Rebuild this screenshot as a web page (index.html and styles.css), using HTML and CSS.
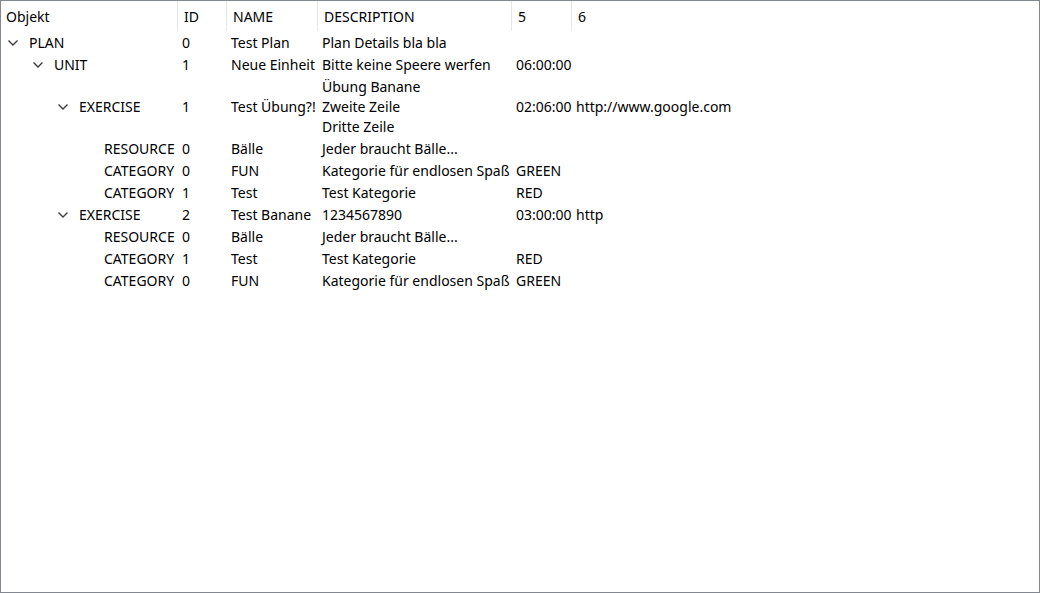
FILE: index.html
```html
<!DOCTYPE html>
<html>
<head>
<meta charset="utf-8">
<link rel="stylesheet" href="styles.css">
</head>
<body>
<div class="tree">
  <div class="header">
    <div class="hcell first">Objekt</div>
    <div class="hcell">ID</div>
    <div class="hcell">NAME</div>
    <div class="hcell">DESCRIPTION</div>
    <div class="hcell">5</div>
    <div class="hcell last">6</div>
  </div>
  <div class="row">
    <div class="cell obj lvl0"><span class="chev"><svg width="10" height="6" viewBox="0 0 10 6"><polyline points="0.5,0.5 5,5 9.5,0.5" fill="none" stroke="#3c3c3c" stroke-width="1.4"/></svg></span>PLAN</div>
    <div class="cell">0</div><div class="cell">Test Plan</div><div class="cell">Plan Details bla bla</div><div class="cell"></div><div class="cell"></div>
  </div>
  <div class="row">
    <div class="cell obj lvl1"><span class="chev"><svg width="10" height="6" viewBox="0 0 10 6"><polyline points="0.5,0.5 5,5 9.5,0.5" fill="none" stroke="#3c3c3c" stroke-width="1.4"/></svg></span>UNIT</div>
    <div class="cell">1</div><div class="cell">Neue Einheit</div><div class="cell">Bitte keine Speere werfen</div><div class="cell">06:00:00</div><div class="cell"></div>
  </div>
  <div class="row">
    <div class="cell obj lvl2"><span class="chev"><svg width="10" height="6" viewBox="0 0 10 6"><polyline points="0.5,0.5 5,5 9.5,0.5" fill="none" stroke="#3c3c3c" stroke-width="1.4"/></svg></span>EXERCISE</div>
    <div class="cell">1</div><div class="cell">Test Übung?!</div><div class="cell multi">Übung Banane<br>Zweite Zeile<br>Dritte Zeile</div><div class="cell">02:06:00</div><div class="cell">http://www.google.com</div>
  </div>
  <div class="row">
    <div class="cell obj lvl3">RESOURCE</div>
    <div class="cell">0</div><div class="cell">Bälle</div><div class="cell">Jeder braucht Bälle...</div><div class="cell"></div><div class="cell"></div>
  </div>
  <div class="row">
    <div class="cell obj lvl3">CATEGORY</div>
    <div class="cell">0</div><div class="cell">FUN</div><div class="cell">Kategorie für endlosen Spaß</div><div class="cell">GREEN</div><div class="cell"></div>
  </div>
  <div class="row">
    <div class="cell obj lvl3">CATEGORY</div>
    <div class="cell">1</div><div class="cell">Test</div><div class="cell">Test Kategorie</div><div class="cell">RED</div><div class="cell"></div>
  </div>
  <div class="row">
    <div class="cell obj lvl2"><span class="chev"><svg width="10" height="6" viewBox="0 0 10 6"><polyline points="0.5,0.5 5,5 9.5,0.5" fill="none" stroke="#3c3c3c" stroke-width="1.4"/></svg></span>EXERCISE</div>
    <div class="cell">2</div><div class="cell">Test Banane</div><div class="cell">1234567890</div><div class="cell">03:00:00</div><div class="cell">http</div>
  </div>
  <div class="row">
    <div class="cell obj lvl3">RESOURCE</div>
    <div class="cell">0</div><div class="cell">Bälle</div><div class="cell">Jeder braucht Bälle...</div><div class="cell"></div><div class="cell"></div>
  </div>
  <div class="row">
    <div class="cell obj lvl3">CATEGORY</div>
    <div class="cell">1</div><div class="cell">Test</div><div class="cell">Test Kategorie</div><div class="cell">RED</div><div class="cell"></div>
  </div>
  <div class="row">
    <div class="cell obj lvl3">CATEGORY</div>
    <div class="cell">0</div><div class="cell">FUN</div><div class="cell">Kategorie für endlosen Spaß</div><div class="cell">GREEN</div><div class="cell"></div>
  </div>
</div>
</body>
</html>
```

FILE: styles.css
```css
html, body {
  margin: 0;
  padding: 0;
  background: #ffffff;
}
.tree {
  box-sizing: border-box;
  width: 1040px;
  height: 593px;
  border: 1px solid #828790;
  background: #ffffff;
  font-family: "Noto Sans", "Open Sans", sans-serif;
  font-size: 14px;
  color: #000000;
  overflow: hidden;
}
.header, .row {
  display: grid;
  grid-template-columns: 177px 49px 91px 194px 60px 1fr;
}
.header {
  height: 30px;
}
.hcell {
  display: flex;
  align-items: center;
  padding-left: 6px;
  border-right: 1px solid #e5e5e5;
  white-space: nowrap;
}
.hcell.first {
  padding-left: 5px;
}
.hcell.last {
  border-right: none;
}
.row {
  min-height: 22px;
}
.cell {
  display: flex;
  align-items: center;
  padding: 2px 0 0 4px;
  line-height: 20px;
  white-space: nowrap;
}
.cell.multi {
  display: block;
  align-self: center;
}
.obj {
  position: relative;
  padding-left: 28px;
}
.obj.lvl1 { padding-left: 53px; }
.obj.lvl2 { padding-left: 78px; }
.obj.lvl3 { padding-left: 103px; }
.chev {
  position: absolute;
  top: 50%;
  margin-top: -2px;
  width: 10px;
  height: 6px;
  display: block;
}
.chev svg { display: block; }
.lvl0 .chev { left: 7px; }
.lvl1 .chev { left: 32px; }
.lvl2 .chev { left: 57px; }
```
